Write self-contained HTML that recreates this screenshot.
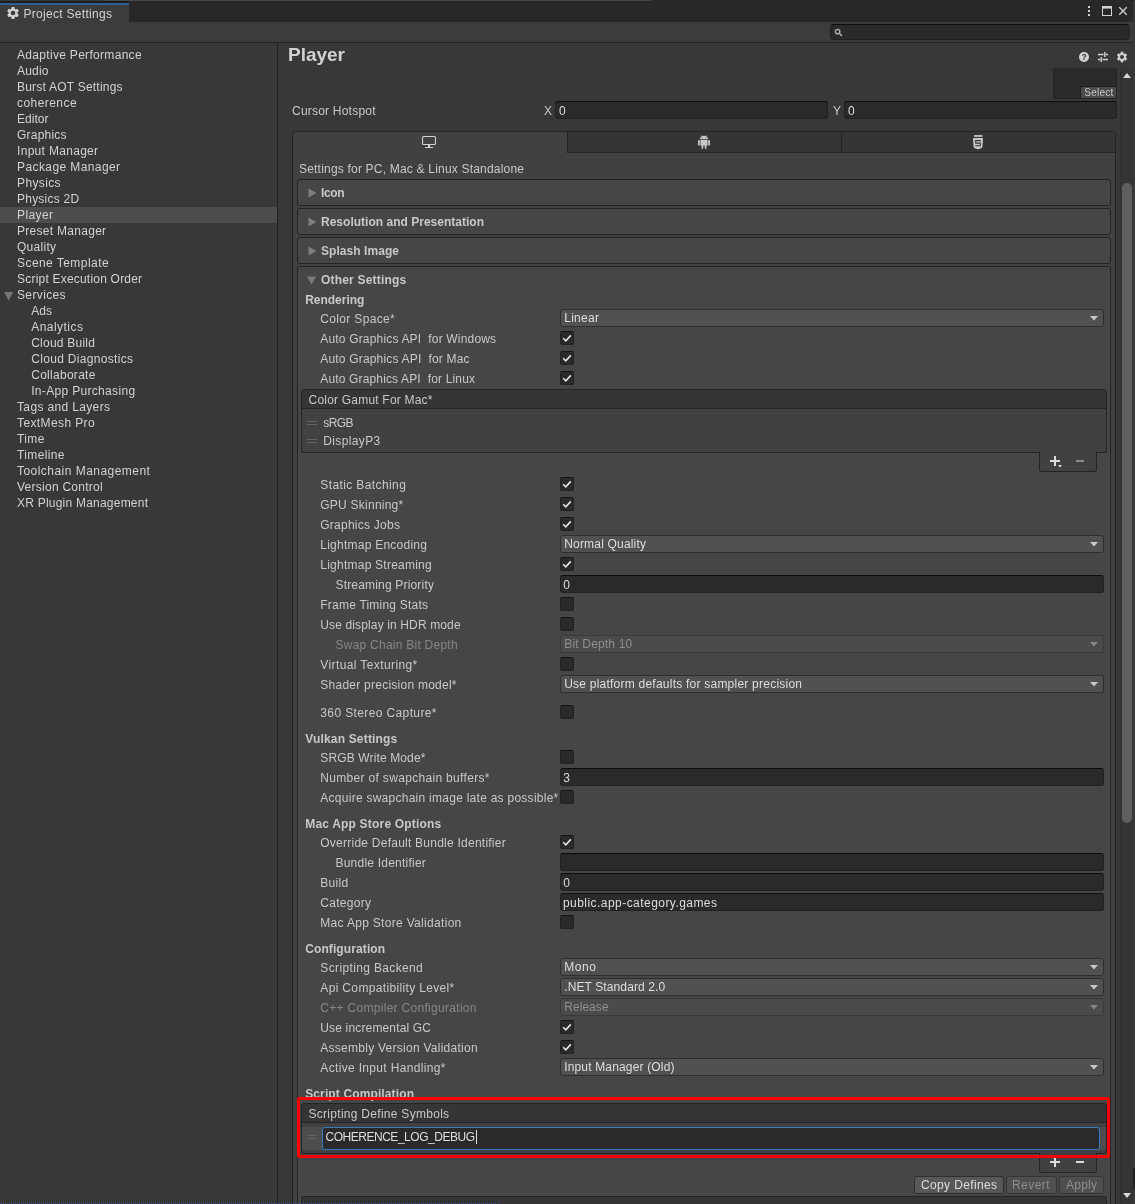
<!DOCTYPE html>
<html><head><meta charset="utf-8"><title>Project Settings</title>
<style>
html,body{margin:0;padding:0}
body{width:1135px;height:1204px;overflow:hidden;position:relative;background:#383838;font:12px "Liberation Sans",sans-serif;color:#c4c4c4}
div,span{position:absolute;box-sizing:border-box}
.t{white-space:pre;line-height:16px;height:16px}
.s{color:#d2d2d2}
.l{color:#c8c8c8}
.v{color:#dedede}
.d{color:#868686}
.dv{color:#8e8e8e}
.b{font-weight:bold}
.fb{border:1px solid #242424;border-radius:3px;background:#464646}
.tf{background:#2a2a2a;border:1px solid #212121;border-top-color:#0d0d0d;border-radius:3px}
.dd{background:#515151;border:1px solid #2e2e2e;border-radius:3px}
.ddd{background:#4b4b4b;border:1px solid #3a3a3a;border-radius:3px}
.cb{width:14px;height:14px;background:#2a2a2a;border:1px solid #212121;border-top-color:#141414;border-radius:2px}
.btn{background:#585858;border:1px solid #2e2e2e;border-radius:3px}
.btnd{background:#4f4f4f;border:1px solid #363636;border-radius:3px}
svg{position:absolute;overflow:visible}
</style></head><body><div id="w" style="left:0;top:0;width:1135px;height:1204px;overflow:hidden;will-change:transform">

<div style="left:0px;top:0px;width:1135px;height:22px;background:#282828"></div>
<div style="left:0px;top:0px;width:103px;height:1px;background:#383838"></div>
<div style="left:103px;top:0px;width:548px;height:1px;background:#464646"></div>
<div style="left:0px;top:1px;width:129px;height:2px;background:#1c1c1c"></div>
<div style="left:0px;top:3px;width:129px;height:19px;background:#3c3c3c"></div>
<div style="left:0px;top:3px;width:129px;height:2px;background:#2c5f96"></div>
<div style="left:0px;top:22px;width:1135px;height:20px;background:#3c3c3c"></div>
<div style="left:0px;top:42px;width:1135px;height:1px;background:#232323"></div>
<div class="tf" style="left:830px;top:24px;width:300px;height:16px;border-radius:4px;border-top-color:#0d0d0d"></div>
<div style="left:0px;top:207px;width:277px;height:16px;background:#4d4d4d"></div>
<div style="left:277px;top:43px;width:1px;height:1161px;background:#232323"></div>
<div style="left:1120px;top:68px;width:13px;height:1136px;background:#353535;border-left:1px solid #303030"></div>
<div style="left:1122px;top:183px;width:10px;height:640px;background:#5f5f5f;border-radius:5px"></div>
<div style="left:1133px;top:1px;width:2px;height:1203px;background:#383838"></div>
<div style="left:1133px;top:1168px;width:2px;height:21px;background:#222"></div>
<div style="left:1053px;top:68px;width:64px;height:31px;background:#2a2a2a;border:1px solid #242424;border-top:none"></div>
<div style="left:1080px;top:86px;width:36px;height:12px;background:#4a4a4a;border-top:1px solid #1e1e1e;border-left:1px solid #1e1e1e"></div>
<div class="tf" style="left:555px;top:101px;width:273px;height:18px;"></div>
<div class="tf" style="left:844px;top:101px;width:273px;height:18px;"></div>
<div style="left:292px;top:131px;width:824px;height:1129px;background:#414141;border:1px solid #242424;border-radius:3px 3px 0 0"></div>
<div style="left:567px;top:132px;width:548px;height:21px;background:#353535;border-left:1px solid #242424;border-bottom:1px solid #242424;border-radius:0 2px 0 0"></div>
<div style="left:841px;top:132px;width:1px;height:20px;background:#242424"></div>
<div class="fb" style="left:297px;top:179px;width:814px;height:27px;"></div>
<div class="fb" style="left:297px;top:208px;width:814px;height:27px;"></div>
<div class="fb" style="left:297px;top:237px;width:814px;height:27px;"></div>
<div class="fb" style="left:297px;top:266px;width:814px;height:994px;"></div>
<div style="left:301px;top:1196px;width:806px;height:34px;background:#353535;border:1px solid #242424;border-radius:3px 3px 0 0"></div>
<div class="dd" style="left:560px;top:309px;width:544px;height:18px;"></div>
<svg style="left:1090px;top:316px" width="8" height="5"><path d="M0 0H8L4 4.6Z" fill="#c8c8c8"/></svg>
<div class="dd" style="left:560px;top:535px;width:544px;height:18px;"></div>
<svg style="left:1090px;top:542px" width="8" height="5"><path d="M0 0H8L4 4.6Z" fill="#c8c8c8"/></svg>
<div class="ddd" style="left:560px;top:635px;width:544px;height:18px;"></div>
<svg style="left:1090px;top:642px" width="8" height="5"><path d="M0 0H8L4 4.6Z" fill="#858585"/></svg>
<div class="dd" style="left:560px;top:675px;width:544px;height:18px;"></div>
<svg style="left:1090px;top:682px" width="8" height="5"><path d="M0 0H8L4 4.6Z" fill="#c8c8c8"/></svg>
<div class="dd" style="left:560px;top:958px;width:544px;height:18px;"></div>
<svg style="left:1090px;top:965px" width="8" height="5"><path d="M0 0H8L4 4.6Z" fill="#c8c8c8"/></svg>
<div class="dd" style="left:560px;top:978px;width:544px;height:18px;"></div>
<svg style="left:1090px;top:985px" width="8" height="5"><path d="M0 0H8L4 4.6Z" fill="#c8c8c8"/></svg>
<div class="ddd" style="left:560px;top:998px;width:544px;height:18px;"></div>
<svg style="left:1090px;top:1005px" width="8" height="5"><path d="M0 0H8L4 4.6Z" fill="#858585"/></svg>
<div class="dd" style="left:560px;top:1058px;width:544px;height:18px;"></div>
<svg style="left:1090px;top:1065px" width="8" height="5"><path d="M0 0H8L4 4.6Z" fill="#c8c8c8"/></svg>
<div class="tf" style="left:560px;top:575px;width:544px;height:18px;"></div>
<div class="tf" style="left:560px;top:768px;width:544px;height:18px;"></div>
<div class="tf" style="left:560px;top:853px;width:544px;height:18px;"></div>
<div class="tf" style="left:560px;top:873px;width:544px;height:18px;"></div>
<div class="tf" style="left:560px;top:893px;width:544px;height:18px;"></div>
<div class="cb" style="left:560px;top:331px"></div>
<svg style="left:560px;top:331px" width="14" height="14"><path d="M3.2 7.2 L5.8 9.8 L10.8 4.4" fill="none" stroke="#e6e6e6" stroke-width="1.55"/></svg>
<div class="cb" style="left:560px;top:351px"></div>
<svg style="left:560px;top:351px" width="14" height="14"><path d="M3.2 7.2 L5.8 9.8 L10.8 4.4" fill="none" stroke="#e6e6e6" stroke-width="1.55"/></svg>
<div class="cb" style="left:560px;top:371px"></div>
<svg style="left:560px;top:371px" width="14" height="14"><path d="M3.2 7.2 L5.8 9.8 L10.8 4.4" fill="none" stroke="#e6e6e6" stroke-width="1.55"/></svg>
<div class="cb" style="left:560px;top:477px"></div>
<svg style="left:560px;top:477px" width="14" height="14"><path d="M3.2 7.2 L5.8 9.8 L10.8 4.4" fill="none" stroke="#e6e6e6" stroke-width="1.55"/></svg>
<div class="cb" style="left:560px;top:497px"></div>
<svg style="left:560px;top:497px" width="14" height="14"><path d="M3.2 7.2 L5.8 9.8 L10.8 4.4" fill="none" stroke="#e6e6e6" stroke-width="1.55"/></svg>
<div class="cb" style="left:560px;top:517px"></div>
<svg style="left:560px;top:517px" width="14" height="14"><path d="M3.2 7.2 L5.8 9.8 L10.8 4.4" fill="none" stroke="#e6e6e6" stroke-width="1.55"/></svg>
<div class="cb" style="left:560px;top:557px"></div>
<svg style="left:560px;top:557px" width="14" height="14"><path d="M3.2 7.2 L5.8 9.8 L10.8 4.4" fill="none" stroke="#e6e6e6" stroke-width="1.55"/></svg>
<div class="cb" style="left:560px;top:597px"></div>
<div class="cb" style="left:560px;top:617px"></div>
<div class="cb" style="left:560px;top:657px"></div>
<div class="cb" style="left:560px;top:705px"></div>
<div class="cb" style="left:560px;top:750px"></div>
<div class="cb" style="left:560px;top:790px"></div>
<div class="cb" style="left:560px;top:835px"></div>
<svg style="left:560px;top:835px" width="14" height="14"><path d="M3.2 7.2 L5.8 9.8 L10.8 4.4" fill="none" stroke="#e6e6e6" stroke-width="1.55"/></svg>
<div class="cb" style="left:560px;top:915px"></div>
<div class="cb" style="left:560px;top:1020px"></div>
<svg style="left:560px;top:1020px" width="14" height="14"><path d="M3.2 7.2 L5.8 9.8 L10.8 4.4" fill="none" stroke="#e6e6e6" stroke-width="1.55"/></svg>
<div class="cb" style="left:560px;top:1040px"></div>
<svg style="left:560px;top:1040px" width="14" height="14"><path d="M3.2 7.2 L5.8 9.8 L10.8 4.4" fill="none" stroke="#e6e6e6" stroke-width="1.55"/></svg>
<svg style="left:308px;top:188px" width="9" height="10"><path d="M0.5 0.5 L8.5 5 L0.5 9.5 Z" fill="#7d7d7d"/></svg>
<svg style="left:308px;top:217px" width="9" height="10"><path d="M0.5 0.5 L8.5 5 L0.5 9.5 Z" fill="#7d7d7d"/></svg>
<svg style="left:308px;top:246px" width="9" height="10"><path d="M0.5 0.5 L8.5 5 L0.5 9.5 Z" fill="#7d7d7d"/></svg>
<svg style="left:306px;top:276px" width="11" height="9"><path d="M1 0.5L10 0.5L5.5 8.4Z" fill="#7a7a7a"/></svg>
<svg style="left:4px;top:291.5px" width="10" height="8.5"><path d="M0.1 0L9.2 0L4.65 8.4Z" fill="#757575"/></svg>
<div style="left:301px;top:408px;width:806px;height:45px;background:#414141;border:1px solid #242424;border-top:none;border-radius:0 0 3px 3px"></div>
<div style="left:301px;top:389px;width:806px;height:20px;background:#353535;border:1px solid #242424;border-radius:3px 3px 0 0"></div>
<div style="left:1039px;top:452px;width:58px;height:20px;background:#414141;border:1px solid #242424;border-top:none;border-radius:0 0 3px 3px"></div>
<div style="left:307px;top:421px;width:10px;height:1px;background:#626262"></div>
<div style="left:307px;top:424px;width:10px;height:1px;background:#626262"></div>
<div style="left:307px;top:439px;width:10px;height:1px;background:#626262"></div>
<div style="left:307px;top:442px;width:10px;height:1px;background:#626262"></div>
<div style="left:1050px;top:460px;width:10px;height:2px;background:#dcdcdc"></div>
<div style="left:1054px;top:456px;width:2px;height:10px;background:#dcdcdc"></div>
<svg style="left:1058px;top:465px" width="4" height="3"><path d="M0 0H4L2 2.5Z" fill="#dcdcdc"/></svg>
<div style="left:1076px;top:460px;width:8px;height:2px;background:#8e8e8e"></div>
<div style="left:301px;top:1122px;width:806px;height:32px;background:#414141;border:1px solid #242424;border-top:none;border-radius:0 0 3px 3px"></div>
<div style="left:301px;top:1103px;width:806px;height:20px;background:#353535;border:1px solid #242424;border-radius:3px 3px 0 0"></div>
<div style="left:1039px;top:1153px;width:58px;height:20px;background:#414141;border:1px solid #242424;border-top:none;border-radius:0 0 3px 3px"></div>
<div style="left:302px;top:1127px;width:804px;height:23px;background:#4d4d4d"></div>
<div style="left:307px;top:1135px;width:10px;height:1px;background:#626262"></div>
<div style="left:307px;top:1138px;width:10px;height:1px;background:#626262"></div>
<div style="left:322px;top:1127px;width:778px;height:23px;background:#2a2a2a;border:1px solid #3a79bb;border-radius:3px"></div>
<div style="left:476px;top:1130px;width:1px;height:14px;background:#e0e0e0"></div>
<div style="left:1050px;top:1161px;width:10px;height:2px;background:#dcdcdc"></div>
<div style="left:1054px;top:1157px;width:2px;height:10px;background:#dcdcdc"></div>
<div style="left:1076px;top:1161px;width:8px;height:2px;background:#dcdcdc"></div>
<div class="btn" style="left:914px;top:1176px;width:90px;height:18px;"></div>
<div class="btnd" style="left:1006px;top:1176px;width:51px;height:18px;"></div>
<div class="btnd" style="left:1059px;top:1176px;width:45px;height:18px;"></div>
<div style="left:297px;top:1097px;width:813px;height:61px;border:3px solid #fb0000;border-radius:2px;z-index:5"></div>
<div style="left:0px;top:1203px;width:500px;height:1px;border-top:1px dotted #35508c;opacity:.7;z-index:6"></div>
<div style="left:1088px;top:6px;width:2px;height:2px;background:#d0d0d0"></div>
<div style="left:1088px;top:10px;width:2px;height:2px;background:#d0d0d0"></div>
<div style="left:1088px;top:14px;width:2px;height:2px;background:#d0d0d0"></div>
<svg style="left:1102px;top:6px" width="10" height="10"><rect x="0.5" y="0.5" width="9" height="9" fill="none" stroke="#d2d2d2" stroke-width="1"/><rect x="0" y="0" width="10" height="2.6" fill="#d2d2d2"/></svg>
<svg style="left:1119px;top:7px" width="8" height="8"><path d="M0.3 0.3L7.7 7.7M7.7 0.3L0.3 7.7" stroke="#d2d2d2" stroke-width="1.3" fill="none"/></svg>
<svg style="left:834px;top:28px" width="10" height="10"><circle cx="3.6" cy="3.6" r="2.2" fill="none" stroke="#b0b0b0" stroke-width="1.4"/><path d="M5.3 5.3L8 8" stroke="#b0b0b0" stroke-width="1.6"/></svg>
<svg style="left:13px;top:13px" width="1" height="1"><path d="M1.62 -4.21 L1.48 -5.92 L-1.48 -5.92 L-1.62 -4.21 L-2.84 -3.51 L-4.39 -4.24 L-5.86 -1.68 L-4.46 -0.71 L-4.46 0.71 L-5.86 1.68 L-4.39 4.24 L-2.84 3.51 L-1.62 4.21 L-1.48 5.92 L1.48 5.92 L1.62 4.21 L2.84 3.51 L4.39 4.24 L5.86 1.68 L4.46 0.71 L4.46 -0.71 L5.86 -1.68 L4.39 -4.24 L2.84 -3.51Z M2.318 0 A2.318 2.318 0 1 0 -2.318 0 A2.318 2.318 0 1 0 2.318 0Z" fill="#d2d2d2" fill-rule="evenodd"/></svg>
<svg style="left:1122px;top:57px" width="1" height="1"><path d="M1.41 -3.66 L1.28 -5.14 L-1.28 -5.14 L-1.41 -3.66 L-2.47 -3.05 L-3.81 -3.68 L-5.09 -1.46 L-3.87 -0.61 L-3.87 0.61 L-5.09 1.46 L-3.81 3.68 L-2.47 3.05 L-1.41 3.66 L-1.28 5.14 L1.28 5.14 L1.41 3.66 L2.47 3.05 L3.81 3.68 L5.09 1.46 L3.87 0.61 L3.87 -0.61 L5.09 -1.46 L3.81 -3.68 L2.47 -3.05Z M2.014 0 A2.014 2.014 0 1 0 -2.014 0 A2.014 2.014 0 1 0 2.014 0Z" fill="#d2d2d2" fill-rule="evenodd"/></svg>
<svg style="left:1079px;top:52px" width="10" height="10"><circle cx="5" cy="5" r="5" fill="#d2d2d2"/><text x="5" y="8.2" font-size="8.5" font-weight="bold" text-anchor="middle" fill="#383838" font-family="Liberation Sans, sans-serif">?</text></svg>
<svg style="left:1098px;top:52px" width="10" height="10"><path d="M0 2.5H5.5M8 2.5H10M0 7.5H2M4.5 7.5H10M6.8 0V5M3.2 5V10" stroke="#d2d2d2" stroke-width="1.4" fill="none"/></svg>
<svg style="left:1123px;top:73px" width="8" height="5"><path d="M0 5H8L4 0Z" fill="#d8d8d8"/></svg>
<svg style="left:1123px;top:1193px" width="8" height="5"><path d="M0 0H8L4 5Z" fill="#d8d8d8"/></svg>
<svg style="left:422px;top:136px" width="14" height="12"><rect x="0.55" y="0.55" width="12.9" height="7.9" rx="1" fill="none" stroke="#d2d2d2" stroke-width="1.1"/><rect x="6" y="9" width="2" height="2" fill="#d2d2d2"/><rect x="3" y="11" width="8" height="1" fill="#d2d2d2"/></svg>
<svg style="left:698px;top:135px" width="12" height="14"><path d="M2 4.3 A4 3.5 0 0 1 10 4.3 Z" fill="#c8c8c8"/><path d="M3.3 .2L4.3 1.5M8.7 .2L7.7 1.5" stroke="#c8c8c8" stroke-width=".6"/><circle cx="4.5" cy="2.9" r=".45" fill="#353535"/><circle cx="7.5" cy="2.9" r=".45" fill="#353535"/><path d="M2.4 5H9.6V10A.8 .8 0 0 1 8.8 10.8H3.2A.8 .8 0 0 1 2.4 10Z" fill="#c8c8c8"/><rect x="0" y="5" width="1.8" height="5.6" rx=".9" fill="#c8c8c8"/><rect x="10.2" y="5" width="1.8" height="5.6" rx=".9" fill="#c8c8c8"/><rect x="3.6" y="10" width="1.6" height="4" rx=".8" fill="#c8c8c8"/><rect x="6.8" y="10" width="1.6" height="4" rx=".8" fill="#c8c8c8"/></svg>
<svg style="left:973px;top:135px" width="10" height="15"><rect x="1" y="0" width="8.5" height="1.9" fill="#bdbdbd"/><path d="M0 3H10L9.4 12Q9.3 13.2 5 14.3Q.7 13.2 .6 12Z" fill="#c8c8c8"/><path d="M7.9 5.6H2.7V8.1H7.3V10.8H2.3" fill="none" stroke="#353535" stroke-width="1.05"/></svg>
<span class="t s" style="left:17px;top:47px;letter-spacing:0.309px">Adaptive Performance</span>
<span class="t s" style="left:17px;top:63px;letter-spacing:0.199px">Audio</span>
<span class="t s" style="left:17px;top:79px;letter-spacing:0.222px">Burst AOT Settings</span>
<span class="t s" style="left:17px;top:95px;letter-spacing:0.444px">coherence</span>
<span class="t s" style="left:17px;top:111px;letter-spacing:0.028px">Editor</span>
<span class="t s" style="left:17px;top:127px;letter-spacing:0.224px">Graphics</span>
<span class="t s" style="left:17px;top:143px;letter-spacing:0.309px">Input Manager</span>
<span class="t s" style="left:17px;top:159px;letter-spacing:0.407px">Package Manager</span>
<span class="t s" style="left:17px;top:175px;letter-spacing:0.376px">Physics</span>
<span class="t s" style="left:17px;top:191px;letter-spacing:0.23px">Physics 2D</span>
<span class="t s" style="left:17px;top:207px;letter-spacing:0.397px">Player</span>
<span class="t s" style="left:17px;top:223px;letter-spacing:0.285px">Preset Manager</span>
<span class="t s" style="left:17px;top:239px;letter-spacing:0.273px">Quality</span>
<span class="t s" style="left:17px;top:255px;letter-spacing:0.443px">Scene Template</span>
<span class="t s" style="left:17px;top:271px;letter-spacing:0.209px">Script Execution Order</span>
<span class="t s" style="left:17px;top:287px;letter-spacing:0.369px">Services</span>
<span class="t s" style="left:31.2px;top:303px;letter-spacing:0.106px">Ads</span>
<span class="t s" style="left:31.2px;top:319px;letter-spacing:0.471px">Analytics</span>
<span class="t s" style="left:31.2px;top:335px;letter-spacing:0.233px">Cloud Build</span>
<span class="t s" style="left:31.2px;top:351px;letter-spacing:0.318px">Cloud Diagnostics</span>
<span class="t s" style="left:31.2px;top:367px;letter-spacing:0.283px">Collaborate</span>
<span class="t s" style="left:31.2px;top:383px;letter-spacing:0.323px">In-App Purchasing</span>
<span class="t s" style="left:17px;top:399px;letter-spacing:0.353px">Tags and Layers</span>
<span class="t s" style="left:17px;top:415px;letter-spacing:0.386px">TextMesh Pro</span>
<span class="t s" style="left:17px;top:431px;letter-spacing:0.389px">Time</span>
<span class="t s" style="left:17px;top:447px;letter-spacing:0.371px">Timeline</span>
<span class="t s" style="left:17px;top:463px;letter-spacing:0.464px">Toolchain Management</span>
<span class="t s" style="left:17px;top:479px;letter-spacing:0.254px">Version Control</span>
<span class="t s" style="left:17px;top:495px;letter-spacing:0.224px">XR Plugin Management</span>
<span class="t s" style="left:23.5px;top:5.5px;letter-spacing:0.29px">Project Settings</span>
<span class="t s b" style="left:288px;top:43.0px;letter-spacing:-0.009px;font-size:19px;line-height:24px;height:24px">Player</span>
<span class="t l" style="left:292px;top:103px;letter-spacing:0.215px">Cursor Hotspot</span>
<span class="t l" style="left:544px;top:103px;letter-spacing:0px">X</span>
<span class="t l" style="left:833px;top:103px;letter-spacing:0px">Y</span>
<span class="t v" style="left:559px;top:103px;letter-spacing:0.2px">0</span>
<span class="t v" style="left:848px;top:103px;letter-spacing:0.2px">0</span>
<span class="t l" style="left:1084.3px;top:86.5px;letter-spacing:0.241px;font-size:10px;line-height:12px;height:12px">Select</span>
<span class="t l" style="left:299px;top:161px;letter-spacing:0.199px">Settings for PC, Mac &amp; Linux Standalone</span>
<span class="t l b" style="left:321px;top:185px;letter-spacing:-0.391px">Icon</span>
<span class="t l b" style="left:321px;top:214px;letter-spacing:0.012px">Resolution and Presentation</span>
<span class="t l b" style="left:321px;top:243px;letter-spacing:0.057px">Splash Image</span>
<span class="t l b" style="left:321px;top:272px;letter-spacing:0.193px">Other Settings</span>
<span class="t l b" style="left:305.2px;top:292px;letter-spacing:-0.018px">Rendering</span>
<span class="t l" style="left:320.3px;top:311px;letter-spacing:0.335px">Color Space*</span>
<span class="t l" style="left:320.3px;top:331px;letter-spacing:0.174px">Auto Graphics API  for Windows</span>
<span class="t l" style="left:320.3px;top:351px;letter-spacing:0.179px">Auto Graphics API  for Mac</span>
<span class="t l" style="left:320.3px;top:371px;letter-spacing:0.146px">Auto Graphics API  for Linux</span>
<span class="t l" style="left:308.5px;top:392px;letter-spacing:0.209px">Color Gamut For Mac*</span>
<span class="t l" style="left:323.3px;top:415px;letter-spacing:-0.572px">sRGB</span>
<span class="t l" style="left:323.3px;top:433px;letter-spacing:0.371px">DisplayP3</span>
<span class="t l" style="left:320.3px;top:477px;letter-spacing:0.39px">Static Batching</span>
<span class="t l" style="left:320.3px;top:497px;letter-spacing:0.238px">GPU Skinning*</span>
<span class="t l" style="left:320.3px;top:517px;letter-spacing:0.241px">Graphics Jobs</span>
<span class="t l" style="left:320.3px;top:537px;letter-spacing:0.241px">Lightmap Encoding</span>
<span class="t l" style="left:320.3px;top:557px;letter-spacing:0.236px">Lightmap Streaming</span>
<span class="t l" style="left:335.5px;top:577px;letter-spacing:0.178px">Streaming Priority</span>
<span class="t l" style="left:320.3px;top:597px;letter-spacing:0.216px">Frame Timing Stats</span>
<span class="t l" style="left:320.3px;top:617px;letter-spacing:0.132px">Use display in HDR mode</span>
<span class="t d" style="left:335.5px;top:637px;letter-spacing:0.247px">Swap Chain Bit Depth</span>
<span class="t l" style="left:320.3px;top:657px;letter-spacing:0.395px">Virtual Texturing*</span>
<span class="t l" style="left:320.3px;top:677px;letter-spacing:0.248px">Shader precision model*</span>
<span class="t l" style="left:320.3px;top:705px;letter-spacing:0.377px">360 Stereo Capture*</span>
<span class="t l b" style="left:305.2px;top:731px;letter-spacing:0.18px">Vulkan Settings</span>
<span class="t l" style="left:320.3px;top:750px;letter-spacing:0.13px">SRGB Write Mode*</span>
<span class="t l" style="left:320.3px;top:770px;letter-spacing:0.321px">Number of swapchain buffers*</span>
<span class="t l" style="left:320.3px;top:790px;letter-spacing:0.263px">Acquire swapchain image late as possible*</span>
<span class="t l b" style="left:305.2px;top:816px;letter-spacing:0.193px">Mac App Store Options</span>
<span class="t l" style="left:320.3px;top:835px;letter-spacing:0.241px">Override Default Bundle Identifier</span>
<span class="t l" style="left:335.5px;top:855px;letter-spacing:0.223px">Bundle Identifier</span>
<span class="t l" style="left:320.3px;top:875px;letter-spacing:0.278px">Build</span>
<span class="t l" style="left:320.3px;top:895px;letter-spacing:0.285px">Category</span>
<span class="t l" style="left:320.3px;top:915px;letter-spacing:0.31px">Mac App Store Validation</span>
<span class="t l b" style="left:305.2px;top:941px;letter-spacing:0.104px">Configuration</span>
<span class="t l" style="left:320.3px;top:960px;letter-spacing:0.36px">Scripting Backend</span>
<span class="t l" style="left:320.3px;top:980px;letter-spacing:0.345px">Api Compatibility Level*</span>
<span class="t d" style="left:320.3px;top:1000px;letter-spacing:0.298px">C++ Compiler Configuration</span>
<span class="t l" style="left:320.3px;top:1020px;letter-spacing:0.156px">Use incremental GC</span>
<span class="t l" style="left:320.3px;top:1040px;letter-spacing:0.26px">Assembly Version Validation</span>
<span class="t l" style="left:320.3px;top:1060px;letter-spacing:0.334px">Active Input Handling*</span>
<span class="t l b" style="left:305.2px;top:1086px;letter-spacing:0.125px">Script Compilation</span>
<span class="t l" style="left:308.5px;top:1106px;letter-spacing:0.284px">Scripting Define Symbols</span>
<span class="t v" style="left:564.2px;top:310px;letter-spacing:0.288px">Linear</span>
<span class="t v" style="left:564.2px;top:536px;letter-spacing:0.188px">Normal Quality</span>
<span class="t v" style="left:563.3px;top:577px;letter-spacing:0.2px">0</span>
<span class="t dv" style="left:564.2px;top:636px;letter-spacing:0.187px">Bit Depth 10</span>
<span class="t v" style="left:564.2px;top:676px;letter-spacing:0.231px">Use platform defaults for sampler precision</span>
<span class="t v" style="left:563.3px;top:770px;letter-spacing:0.2px">3</span>
<span class="t v" style="left:563.3px;top:875px;letter-spacing:0.2px">0</span>
<span class="t v" style="left:563px;top:895px;letter-spacing:0.45px">public.app-category.games</span>
<span class="t v" style="left:564.2px;top:959px;letter-spacing:0.59px">Mono</span>
<span class="t v" style="left:564.2px;top:979px;letter-spacing:0.114px">.NET Standard 2.0</span>
<span class="t dv" style="left:564.2px;top:999px;letter-spacing:0.061px">Release</span>
<span class="t v" style="left:564.2px;top:1059px;letter-spacing:0.162px">Input Manager (Old)</span>
<span class="t v" style="left:325.5px;top:1129px;letter-spacing:-0.475px">COHERENCE_LOG_DEBUG</span>
<span class="t l" style="left:308.5px;top:1201px;letter-spacing:0.241px">Additional Compiler Arguments</span>
<span class="t v" style="left:921px;top:1177px;letter-spacing:0.359px">Copy Defines</span>
<span class="t dv" style="left:1012px;top:1177px;letter-spacing:0.431px">Revert</span>
<span class="t dv" style="left:1066px;top:1177px;letter-spacing:0.242px">Apply</span>
</div></body></html>
